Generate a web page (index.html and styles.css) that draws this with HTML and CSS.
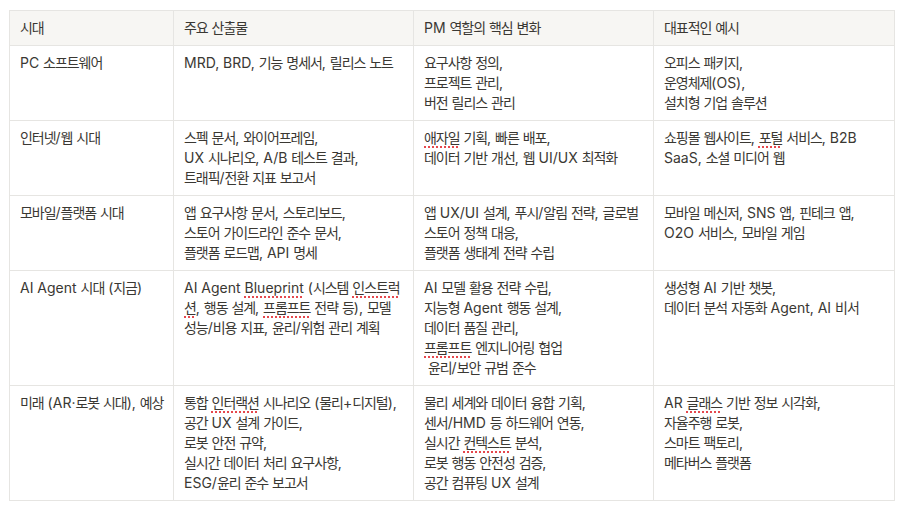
FILE: index.html
```html
<!DOCTYPE html>
<html lang="ko">
<head>
<meta charset="utf-8">
<link rel="stylesheet" href="styles.css">
<script src="script.js" defer></script>
</head>
<body>
<table class="grid">
  <colgroup>
    <col class="c1"><col class="c2"><col class="c3"><col class="c4">
  </colgroup>
  <thead>
    <tr>
      <th>시대</th>
      <th>주요 산출물</th>
      <th>PM 역할의 핵심 변화</th>
      <th>대표적인 예시</th>
    </tr>
  </thead>
  <tbody>
    <tr>
      <td>PC 소프트웨어</td>
      <td>MRD, BRD, 기능 명세서, 릴리스 노트</td>
      <td>요구사항 정의,<br>프로젝트 관리,<br>버전 릴리스 관리</td>
      <td>오피스 패키지,<br>운영체제(OS),<br>설치형 기업 솔루션</td>
    </tr>
    <tr>
      <td>인터넷/웹 시대</td>
      <td>스펙 문서, 와이어프레임,<br>UX 시나리오, A/B 테스트 결과,<br>트래픽/전환 지표 보고서</td>
      <td><span class="sp">애자일</span> 기획, 빠른 배포,<br>데이터 기반 개선, 웹 UI/UX 최적화</td>
      <td>쇼핑몰 웹사이트, <span class="sp">포털</span> 서비스, B2B<br>SaaS, 소셜 미디어 웹</td>
    </tr>
    <tr>
      <td>모바일/플랫폼 시대</td>
      <td>앱 요구사항 문서, 스토리보드,<br>스토어 가이드라인 준수 문서,<br>플랫폼 로드맵, API 명세</td>
      <td>앱 UX/UI 설계, 푸시/알림 전략, 글로벌<br>스토어 정책 대응,<br>플랫폼 생태계 전략 수립</td>
      <td>모바일 메신저, SNS 앱, 핀테크 앱,<br>O2O 서비스, 모바일 게임</td>
    </tr>
    <tr>
      <td>AI Agent 시대 (지금)</td>
      <td>AI Agent <span class="sp">Blueprint</span> (시스템 <span class="sp">인스트럭</span><br><span class="sp">션</span>, 행동 설계, <span class="sp">프롬프트</span> 전략 등), 모델<br>성능/비용 지표, 윤리/위험 관리 계획</td>
      <td>AI 모델 활용 전략 수립,<br>지능형 Agent 행동 설계,<br>데이터 품질 관리,<br><span class="sp">프롬프트</span> 엔지니어링 협업<br>&nbsp;윤리/보안 규범 준수</td>
      <td>생성형 AI 기반 챗봇,<br>데이터 분석 자동화 Agent, AI 비서</td>
    </tr>
    <tr>
      <td>미래 (AR·로봇 시대), 예상</td>
      <td>통합 <span class="sp">인터랙션</span> 시나리오 (물리+디지털),<br>공간 UX 설계 가이드,<br>로봇 안전 규약,<br>실시간 데이터 처리 요구사항,<br>ESG/윤리 준수 보고서</td>
      <td>물리 세계와 데이터 융합 기획,<br>센서/HMD 등 하드웨어 연동,<br>실시간 <span class="sp">컨텍스트</span> 분석,<br>로봇 행동 안전성 검증,<br>공간 컴퓨팅 UX 설계</td>
      <td>AR <span class="sp">글래스</span> 기반 정보 시각화,<br>자율주행 로봇,<br>스마트 팩토리,<br>메타버스 플랫폼</td>
    </tr>
  </tbody>
</table>
</body>
</html>
```

FILE: styles.css
```css
html, body {
  margin: 0;
  padding: 0;
  background: #ffffff;
}

body {
  padding: 10px 0 0 9px;
  font-family: Inter, "Noto Sans CJK KR", sans-serif;
  font-size: 14px;
  line-height: 20px;
  color: #3a3833;
}

.grid {
  border-collapse: collapse;
  table-layout: fixed;
  width: 885px;
}

.c1 { width: 164px; }
.c2 { width: 240px; }
.c3 { width: 240px; }
.c4 { width: 241px; }

.grid th,
.grid td {
  border: 1px solid #e6e5e2;
  padding: 7px 10px;
  text-align: left;
  vertical-align: top;
  font-weight: 400;
  white-space: nowrap;
  overflow: hidden;
}

.grid th {
  background: #f7f6f3;
}

.ko {
  letter-spacing: -1.05px;
}

.sp {
  text-decoration-line: underline;
  text-decoration-style: dotted;
  text-decoration-color: #e5484d;
  text-decoration-thickness: 2px;
  text-underline-offset: 3px;
}
```

FILE: script.js
```js
(function () {
  var re = /[\uAC00-\uD7A3]+/g;
  var walker = document.createTreeWalker(document.body, NodeFilter.SHOW_TEXT, null);
  var nodes = [];
  while (walker.nextNode()) nodes.push(walker.currentNode);
  nodes.forEach(function (node) {
    var text = node.nodeValue;
    if (!re.test(text)) return;
    re.lastIndex = 0;
    var frag = document.createDocumentFragment();
    var last = 0, m;
    while ((m = re.exec(text)) !== null) {
      if (m.index > last) frag.appendChild(document.createTextNode(text.slice(last, m.index)));
      var span = document.createElement('span');
      span.className = 'ko';
      span.textContent = m[0];
      frag.appendChild(span);
      last = m.index + m[0].length;
    }
    if (last < text.length) frag.appendChild(document.createTextNode(text.slice(last)));
    node.parentNode.replaceChild(frag, node);
  });
})();
```
